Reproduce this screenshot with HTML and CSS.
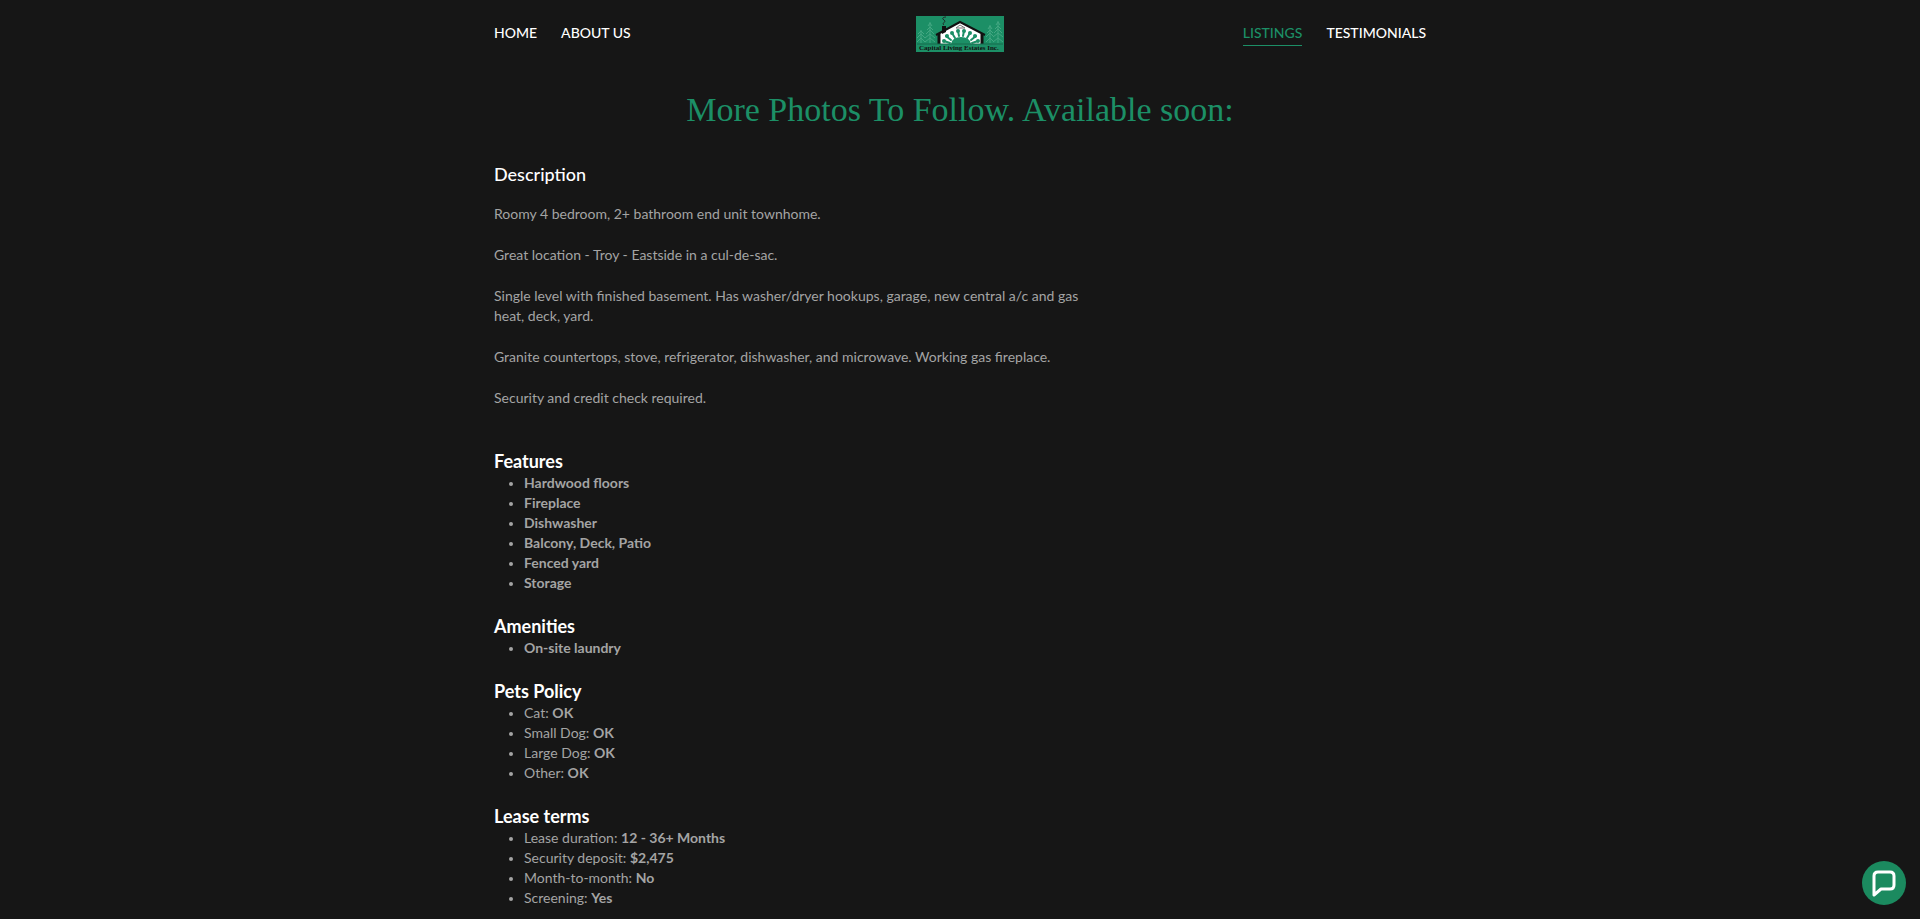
FILE: index.html
```html
<!DOCTYPE html>
<html lang="en">
<head>
    <meta charset="UTF-8">
    <meta name="viewport" content="width=device-width, initial-scale=1.0">
    <title>Listings - Capital Living Estates Inc.</title>
    <link rel="stylesheet" href="styles.css">
</head>
<body>

    <header class="header">
        <nav class="nav">
            <a href="#">HOME</a>
            <a href="#">ABOUT US</a>
        </nav>
        <a href="#" class="logo" aria-label="Capital Living Estates Inc.">
            <svg width="88" height="36" viewBox="0 0 88 36">
                <rect width="88" height="36" fill="#1c8f66"/>
                <!-- trees -->
                <g stroke="#5fb896" stroke-width="1" fill="none" opacity="0.6">
                    <path d="M5 14v13M2 18l3-3 3 3M1 22l4-4 4 4M1 26l4-4 4 4"/>
                    <path d="M14 6v21M12 10l2-3 2 3M11 14l3-3 3 3M10 18l4-4 4 4M9 22l5-4 5 4M9 26l5-4 5 4"/>
                    <path d="M74 9v18M72 13l2-3 2 3M71 17l3-3 3 3M70 21l4-4 4 4M70 26l4-4 4 4"/>
                    <path d="M82 5v22M80 9l2-3 2 3M79 13l3-3 3 3M78 17l4-4 4 4M77 21l5-4 5 4M77 26l5-4 5 4"/>
                </g>
                <!-- house -->
                <path d="M23 28V18L44 6l23 12v10z" fill="#fff"/>
                <path d="M23 28V18M66 28V18" stroke="#111" stroke-width="3"/>
                <path d="M20 19L44 6l25 13" fill="none" stroke="#111" stroke-width="2"/>
                <path d="M26 10h4v6l-4 2z" fill="#111"/>
                <path d="M28 9c-3-2 3-3 0-5s0-3 2-3" fill="none" stroke="#222" stroke-width="1"/>
                <path d="M40 12l4-3 5 3z" fill="#fff" stroke="#777" stroke-width="1"/>
                <!-- sun and leaves -->
                <path d="M35 28a10 7 0 0 1 20 0z" fill="#1c8f66"/>
                <g stroke="#1c8f66" stroke-width="2" stroke-linecap="round">
                    <path d="M28 25l6 2M30 20l5 4M36 17l3 5M42 15l1 5M48 15l-1 5M54 17l-3 5M60 20l-5 4M62 25l-6 2"/>
                </g>
                <g fill="#1c8f66">
                    <circle cx="28" cy="25" r="2"/>
                    <circle cx="31" cy="20" r="2"/>
                    <circle cx="36" cy="17" r="2"/>
                    <circle cx="42" cy="15" r="2"/>
                    <circle cx="48" cy="15" r="2"/>
                    <circle cx="54" cy="17" r="2"/>
                    <circle cx="59" cy="20" r="2"/>
                    <circle cx="62" cy="25" r="2"/>
                </g>
                <path d="M1 28h86" stroke="#176b4d" stroke-width="1"/>
                <text x="3" y="34" class="logo-text">Capital Living Estates Inc.</text>
            </svg>
        </a>
        <nav class="nav nav-right">
            <a href="#" class="active">LISTINGS</a>
            <a href="#">TESTIMONIALS</a>
        </nav>
    </header>

    <main class="content">
        <h1>More Photos To Follow. Available soon:</h1>

        <section class="description">
            <h2>Description</h2>
            <p>Roomy 4 bedroom, 2+ bathroom end unit townhome.</p>
            <p>Great location - Troy - Eastside in a cul-de-sac.</p>
            <p>Single level with finished basement. Has washer/dryer hookups, garage, new central a/c and gas heat, deck, yard.</p>
            <p>Granite countertops, stove, refrigerator, dishwasher, and microwave. Working gas fireplace.</p>
            <p>Security and credit check required.</p>
        </section>

        <section class="details">
            <h3>Features</h3>
            <ul>
                <li><strong>Hardwood floors</strong></li>
                <li><strong>Fireplace</strong></li>
                <li><strong>Dishwasher</strong></li>
                <li><strong>Balcony, Deck, Patio</strong></li>
                <li><strong>Fenced yard</strong></li>
                <li><strong>Storage</strong></li>
            </ul>
            <h3>Amenities</h3>
            <ul>
                <li><strong>On-site laundry</strong></li>
            </ul>
            <h3>Pets Policy</h3>
            <ul>
                <li>Cat: <strong>OK</strong></li>
                <li>Small Dog: <strong>OK</strong></li>
                <li>Large Dog: <strong>OK</strong></li>
                <li>Other: <strong>OK</strong></li>
            </ul>
            <h3>Lease terms</h3>
            <ul>
                <li>Lease duration: <strong>12 - 36+ Months</strong></li>
                <li>Security deposit: <strong>$2,475</strong></li>
                <li>Month-to-month: <strong>No</strong></li>
                <li>Screening: <strong>Yes</strong></li>
            </ul>
        </section>
    </main>

    <button class="chat-btn" type="button" aria-label="Open chat">
        <svg width="26" height="28" viewBox="0 0 26 28">
            <path d="M3 26V7q0-4 4-4h12q4 0 4 4v9q0 4-4 4H10z" fill="none" stroke="#fff" stroke-width="3" stroke-linejoin="round"/>
        </svg>
    </button>

</body>
</html>
```
FILE: styles.css
```css
body {
    margin: 0;
    font-family: 'Lato', sans-serif;
    font-size: 14px;
    line-height: 20px;
    background-color: #161616;
    color: #a4a4a4;
}

.header,
.content {
    max-width: 932px;
    margin: 0 auto;
}

.header {
    display: grid;
    grid-template-columns: 1fr auto 1fr;
    align-items: center;
    padding: 16px 0;
}

.nav {
    display: flex;
    gap: 24px;
}

.nav-right {
    justify-content: flex-end;
}

.nav a {
    padding-bottom: 2px;
    color: #fff;
    font-weight: 500;
    text-decoration: none;
    border-bottom: 1px solid transparent;
}

.nav a.active {
    color: #1c8f66;
    border-bottom-color: #1c8f66;
}

.logo,
.logo svg {
    display: block;
}

.logo-text {
    font-family: 'Liberation Serif', serif;
    font-size: 7px;
    font-weight: bold;
    fill: #111;
}

h1 {
    margin: 18px 0 28px;
    font-family: 'Liberation Serif', serif;
    font-size: 34px;
    font-weight: normal;
    line-height: 48px;
    text-align: center;
    color: #1c8f66;
}

h2,
h3 {
    margin: 0;
    font-size: 18px;
    line-height: 24px;
    color: #fff;
}

h2 {
    font-weight: 500;
    margin-bottom: 18px;
}

.description {
    max-width: 600px;
}

.description p {
    margin: 0 0 21px;
}

.details {
    margin-top: 41px;
}

ul {
    margin: 0 0 21px;
    padding-left: 30px;
}

li::marker {
    font-size: 12px;
}

.chat-btn {
    position: fixed;
    right: 14px;
    bottom: 14px;
    display: flex;
    align-items: center;
    justify-content: center;
    width: 44px;
    height: 44px;
    padding: 0;
    border: none;
    border-radius: 50%;
    background-color: #1b8a5f;
    cursor: pointer;
}
```
